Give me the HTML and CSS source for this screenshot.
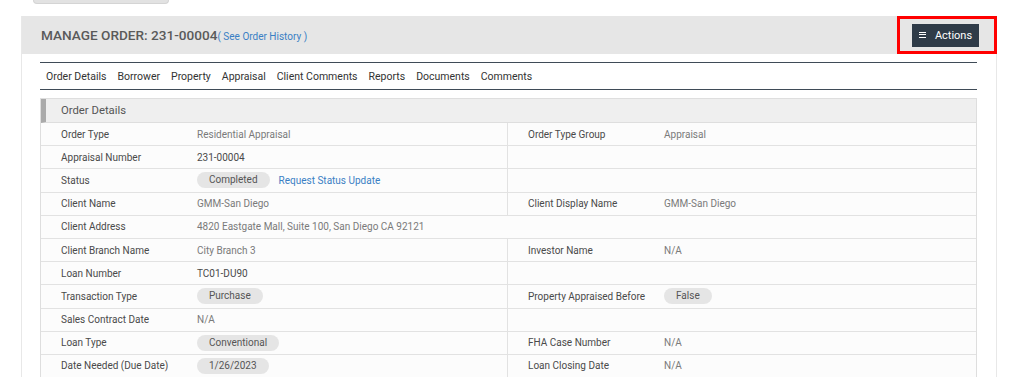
FILE: index.html
```html
<!DOCTYPE html>
<html>
<head>
  <title>Manage Order</title>
  <link rel="stylesheet" href="styles.css">
</head>
<body>
  <div class="top-tab"></div>

  <div class="order-panel">
    <div class="panel-header">
      <h1>MANAGE ORDER: 231-00004<a href="#" class="history-link">( See Order History )</a></h1>
      <div class="actions-box">
        <button class="actions-btn"><span class="menu-icon"></span>Actions</button>
      </div>
    </div>

    <div class="panel-body">
      <ul class="order-nav">
        <li>Order Details</li>
        <li>Borrower</li>
        <li>Property</li>
        <li>Appraisal</li>
        <li>Client Comments</li>
        <li>Reports</li>
        <li>Documents</li>
        <li>Comments</li>
      </ul>

      <div class="details">
        <div class="details-title">Order Details</div>

        <div class="row">
          <div class="half">
            <span class="label">Order Type</span>
            <span class="value">Residential Appraisal</span>
          </div>
          <div class="half">
            <span class="label">Order Type Group</span>
            <span class="value">Appraisal</span>
          </div>
        </div>

        <div class="row">
          <div class="half">
            <span class="label">Appraisal Number</span>
            <span class="value strong">231-00004</span>
          </div>
          <div class="half"></div>
        </div>

        <div class="row">
          <div class="half">
            <span class="label">Status</span>
            <span class="value"><span class="pill">Completed</span><a href="#" class="link">Request Status Update</a></span>
          </div>
          <div class="half"></div>
        </div>

        <div class="row">
          <div class="half">
            <span class="label">Client Name</span>
            <span class="value">GMM-San Diego</span>
          </div>
          <div class="half">
            <span class="label">Client Display Name</span>
            <span class="value">GMM-San Diego</span>
          </div>
        </div>

        <div class="row">
          <div class="full">
            <span class="label">Client Address</span>
            <span class="value">4820 Eastgate Mall, Suite 100, San Diego CA 92121</span>
          </div>
        </div>

        <div class="row">
          <div class="half">
            <span class="label">Client Branch Name</span>
            <span class="value">City Branch 3</span>
          </div>
          <div class="half">
            <span class="label">Investor Name</span>
            <span class="value">N/A</span>
          </div>
        </div>

        <div class="row">
          <div class="half">
            <span class="label">Loan Number</span>
            <span class="value strong">TC01-DU90</span>
          </div>
          <div class="half"></div>
        </div>

        <div class="row">
          <div class="half">
            <span class="label">Transaction Type</span>
            <span class="value"><span class="pill">Purchase</span></span>
          </div>
          <div class="half">
            <span class="label">Property Appraised Before</span>
            <span class="value"><span class="pill">False</span></span>
          </div>
        </div>

        <div class="row">
          <div class="half">
            <span class="label">Sales Contract Date</span>
            <span class="value">N/A</span>
          </div>
          <div class="half"></div>
        </div>

        <div class="row">
          <div class="half">
            <span class="label">Loan Type</span>
            <span class="value"><span class="pill">Conventional</span></span>
          </div>
          <div class="half">
            <span class="label">FHA Case Number</span>
            <span class="value">N/A</span>
          </div>
        </div>

        <div class="row">
          <div class="half">
            <span class="label">Date Needed (Due Date)</span>
            <span class="value"><span class="pill">1/26/2023</span></span>
          </div>
          <div class="half">
            <span class="label">Loan Closing Date</span>
            <span class="value">N/A</span>
          </div>
        </div>
      </div>
    </div>
  </div>
</body>
</html>
```

FILE: styles.css
```css
body {
  margin: 0;
  background-color: #fff;
  font-family: Roboto, "Liberation Sans", Arial, sans-serif;
  color: #555;
}

.top-tab {
  width: 134px;
  height: 3px;
  margin-left: 33px;
  background-color: #e2e2e2;
  border: 1px solid #d4d4d4;
  border-top: none;
  border-radius: 0 0 4px 4px;
}

.order-panel {
  width: 974px;
  margin: 12px 0 0 21px;
  border-left: 1px solid #e8e8e8;
  border-right: 1px solid #e8e8e8;
}

.panel-header {
  display: flex;
  justify-content: space-between;
  align-items: center;
  height: 38px;
  padding-left: 19px;
  background-color: #e6e6e6;
}

.panel-header h1 {
  margin: 0;
  font-size: 13.6px;
  font-weight: 500;
  color: #5a5a5a;
}

.history-link {
  font-size: 10px;
  font-weight: 400;
  color: #3a7fc4;
  text-decoration: none;
}

.actions-box {
  display: flex;
  justify-content: center;
  align-items: center;
  box-sizing: border-box;
  width: 100px;
  height: 38px;
  margin-right: -1px;
  border: 3px solid #f00;
}

.actions-btn {
  display: flex;
  align-items: center;
  justify-content: center;
  width: 67px;
  height: 23px;
  margin-right: 3px;
  padding: 0;
  background-color: #2f3b48;
  color: #fff;
  border: none;
  font-family: Roboto, "Liberation Sans", Arial, sans-serif;
  font-size: 11px;
}

.menu-icon {
  width: 7px;
  height: 6px;
  margin-right: 9px;
  background: linear-gradient(#fff 0 1px, transparent 1px 2.5px, #fff 2.5px 3.5px, transparent 3.5px 5px, #fff 5px 6px);
}

.panel-body {
  padding: 8px 19px 0 18px;
}

.order-nav {
  display: flex;
  gap: 11px;
  margin: 0 0 8px 0;
  padding: 0 0 0 6px;
  height: 26px;
  align-items: center;
  list-style: none;
  border-top: 1px solid #3f4b57;
  border-bottom: 1px solid #3f4b57;
  font-size: 10.5px;
  color: #333;
}

.details {
  border: 1px solid #dedede;
  border-bottom: none;
  font-size: 10px;
}

.details-title {
  height: 23px;
  line-height: 23px;
  padding-left: 15px;
  background-color: #efefef;
  border-left: 5px solid #aaa;
  border-bottom: 1px solid #dedede;
  font-size: 11.3px;
  color: #555;
}

.row {
  display: flex;
  height: 22.2px;
  background-color: #fcfcfc;
  border-bottom: 1px solid #e2e2e2;
}

.half,
.full {
  display: flex;
  align-items: center;
}

.half {
  width: 50%;
}

.half:first-child {
  width: 466px;
  border-right: 1px solid #e2e2e2;
}

.full {
  width: 100%;
}

.label {
  width: 156px;
  padding-left: 20px;
  box-sizing: border-box;
  color: #4a4a4a;
  flex-shrink: 0;
}

.value {
  display: flex;
  align-items: center;
  color: #7a7a7a;
}

.value.strong {
  color: #4a4a4a;
}

.pill {
  display: inline-block;
  height: 16px;
  line-height: 16px;
  padding: 0 12px;
  background-color: #e5e5e5;
  border-radius: 8px;
  color: #555;
}

.link {
  margin-left: 9px;
  color: #3a7fc4;
  text-decoration: none;
}
```
